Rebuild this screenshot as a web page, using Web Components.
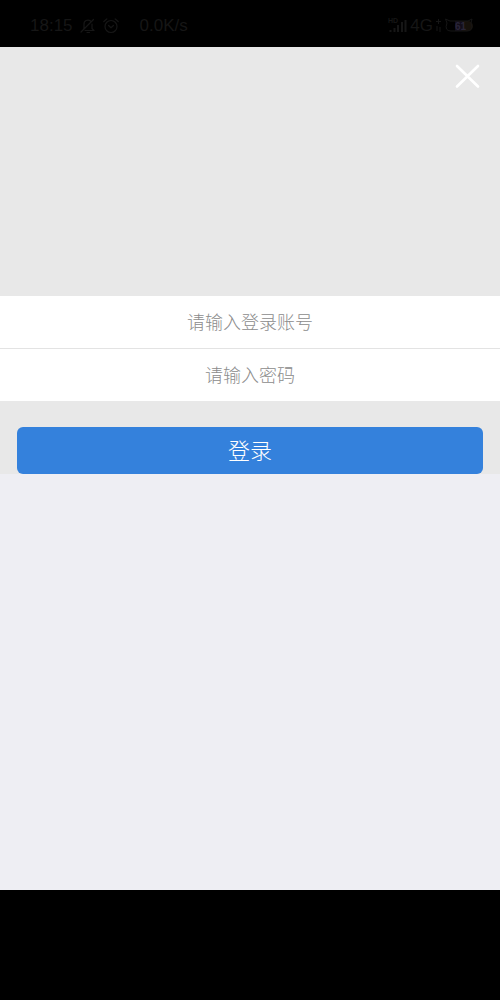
<!DOCTYPE html>
<html lang="zh-CN">
<head>
<meta charset="utf-8">
<meta name="viewport" content="width=device-width, initial-scale=1">
<title>登录</title>
<style>
body {
  margin: 0;
  background: #000;
  font-family: "Liberation Sans", "Noto Sans CJK SC", sans-serif;
}
</style>
</head>
<body>
<login-screen>
  <status-bar slot="status" time="18:15" speed="0.0K/s" network="4G" battery="61"></status-bar>
  <login-form></login-form>
</login-screen>

<script>
class StatusBar extends HTMLElement {
    constructor() {
        super();
        this.attachShadow({mode: 'open'});
    }

    connectedCallback() {
        this.shadowRoot.innerHTML = `
<style>
:host {
  display: flex;
  justify-content: space-between;
  align-items: center;
  box-sizing: border-box;
  height: 47px;
  padding: 4px 26px 0 30px;
  background: #000;
  color: #161616;
  font-size: 17px;
  line-height: 20px;
}
div {
  display: flex;
  align-items: center;
}
.left {
  gap: 7px;
}
.speed {
  margin-left: 14px;
}
.right {
  gap: 2px;
}
svg {
  display: block;
  fill: none;
  stroke: currentColor;
}
</style>
<div class="left">
  <span>${this.getAttribute('time')}</span>
  <svg width="16" height="16" viewBox="0 0 16 16" stroke-width="1.2" stroke-linecap="round" stroke-linejoin="round">
    <path d="M2.500 12.500L4 10.500V6.500A4 4 0 0 1 10.500 3M12 6V10.500L14 12.500H5M7 14.500H9.500M1 14L13.500 1.500"/>
  </svg>
  <svg width="16" height="16" viewBox="0 0 16 16" stroke-width="1.2" stroke-linecap="round" stroke-linejoin="round">
    <circle cx="8" cy="8.500" r="6"/>
    <path d="M.8 3.500L3.800 1M12.200 1L15.200 3.500M5.600 7.500L8 9.700L10.400 7.500"/>
  </svg>
  <span class="speed">${this.getAttribute('speed')}</span>
</div>
<div class="right">
  <svg width="20" height="16" viewBox="0 0 20 16">
    <text x="0" y="5" font-size="7" font-weight="bold" fill="currentColor" stroke="none">HD</text>
    <path d="M2.500 12V14M6.500 10V14M10 7V14M14 4V14M17.500 2V14" stroke-width="2"/>
  </svg>
  <span>${this.getAttribute('network')}</span>
  <svg width="7" height="16" viewBox="0 0 7 16" stroke-width="1">
    <path d="M3.500 1V6M1 3.500H6M2 8V13M5 9V14"/>
  </svg>
  <svg width="30" height="16" viewBox="0 0 30 16">
    <path d="M16 3H24A5 5 0 0 1 24 13H16Z" fill="#16110b" stroke="none"/>
    <path d="M11 3H18V13H11Z" fill="#120d1b" stroke="none"/>
    <path d="M3 5L1.500 1L6 3H24L28 1L27 5Q30 13 23 13H7Q0 13 3 5Z"/>
    <text x="11" y="12" font-size="10" font-weight="bold" fill="#292538" stroke="none">${this.getAttribute('battery')}</text>
  </svg>
</div>
        `;
    }
}

class LoginField extends HTMLElement {
    constructor() {
        super();
        this.attachShadow({mode: 'open'});
    }

    connectedCallback() {
        const label = this.getAttribute('label');
        const type = this.getAttribute('type') || 'text';
        this.shadowRoot.innerHTML = `
<style>
:host {
  display: block;
  background: #fff;
}
input {
  display: block;
  box-sizing: border-box;
  width: 100%;
  height: 52px;
  margin: 0;
  padding: 2px 16px 0;
  border: 0;
  outline: 0;
  background: none;
  color: #333;
  font: inherit;
  font-size: 18px;
  font-weight: 300;
  text-align: center;
}
input::placeholder {
  color: #8c8c8c;
  opacity: 1;
}
</style>
<input type="${type}" placeholder="${label}" aria-label="${label}">
        `;
    }
}

class LoginForm extends HTMLElement {
    constructor() {
        super();
        this.attachShadow({mode: 'open'});
    }

    connectedCallback() {
        this.shadowRoot.innerHTML = `
<style>
:host {
  display: block;
  background: #e8e8e8;
}
header {
  display: flex;
  justify-content: flex-end;
  align-items: flex-start;
  box-sizing: border-box;
  height: 249px;
  padding: 16px 20px;
}
button {
  display: block;
  margin: 0;
  padding: 0;
  border: 0;
  background: none;
  font: inherit;
  cursor: pointer;
}
.close svg {
  display: block;
}
.fields {
  display: grid;
  gap: 1px;
  background: #e3e3e3;
}
.actions {
  padding: 26px 17px 0;
}
.submit {
  width: 100%;
  height: 47px;
  padding-bottom: 3px;
  border-radius: 6px;
  background: #3481dc;
  color: #fff;
  font-size: 22px;
  font-weight: 300;
}
</style>
<header>
  <button class="close" type="button" aria-label="关闭">
    <svg width="25" height="26" viewBox="0 0 25 26" fill="none" stroke="#fff" stroke-width="2.600" stroke-linecap="round">
      <path d="M2 3L23 23.500M23 3L2 23.500"/>
    </svg>
  </button>
</header>
<div class="fields">
  <login-field label="请输入登录账号"></login-field>
  <login-field label="请输入密码" type="password"></login-field>
</div>
<div class="actions">
  <button class="submit" type="button">登录</button>
</div>
        `;
    }
}

class LoginScreen extends HTMLElement {
    constructor() {
        super();
        this.attachShadow({mode: 'open'});
    }

    connectedCallback() {
        this.shadowRoot.innerHTML = `
<style>
:host {
  display: flex;
  flex-direction: column;
  min-height: 100vh;
}
main {
  flex: 1;
  background: #eeeef3;
}
.navigation {
  height: 110px;
  background: #000;
}
</style>
<slot name="status"></slot>
<main><slot></slot></main>
<div class="navigation"></div>
        `;
    }
}

customElements.define('status-bar', StatusBar);
customElements.define('login-field', LoginField);
customElements.define('login-form', LoginForm);
customElements.define('login-screen', LoginScreen);
</script>
</body>
</html>
